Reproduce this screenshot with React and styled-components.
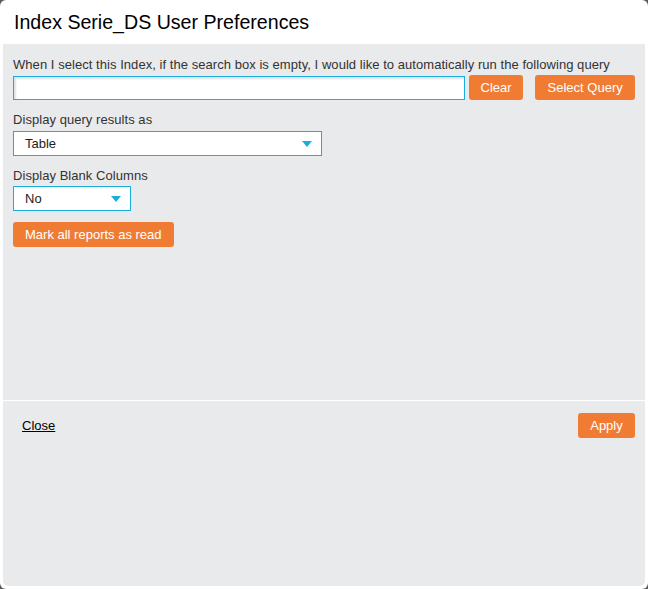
import React from "react";
import styled, { createGlobalStyle } from "styled-components";

const Global = createGlobalStyle`
  html, body { margin: 0; padding: 0; background: #5a5a5a; }
  body { font-family: "Liberation Sans", Arial, sans-serif; }
  * { box-sizing: border-box; }
`;

const Dialog = styled.div`
  width: 648px;
  height: 589px;
  background: #fff;
  border-radius: 6px;
  display: flex;
  flex-direction: column;
  padding: 0 3px 3px 3px;
`;

const Title = styled.h1`
  margin: 0;
  height: 44px;
  padding: 10px 0 0 11px;
  font-size: 19.6px;
  font-weight: normal;
  color: #000;
  line-height: 24px;
`;

const Panel = styled.div`
  flex: 1;
  background: #e9eaec;
  border-radius: 0 0 5px 5px;
  display: flex;
  flex-direction: column;
`;

const Content = styled.div`
  height: 357px;
  padding: 13px 10px 0 10px;
  display: flex;
  flex-direction: column;
  border-bottom: 1px solid #fff;
`;

const Label = styled.div`
  font-size: 13px;
  line-height: 15px;
  letter-spacing: 0.05px;
  color: #333;
  margin-top: ${(p) => p.$mt || 0}px;
  margin-bottom: ${(p) => p.$mb || 4}px;
`;

const Row = styled.div`
  display: flex;
  align-items: flex-end;
`;

const TextInput = styled.div`
  flex: 0 0 452px;
  height: 24px;
  background: #fff;
  border: 1px solid #1aaee0;
  box-shadow: inset 2px 2px 2px rgba(0, 0, 0, 0.12);
  margin-right: 4px;
`;

const Button = styled.button`
  flex-shrink: 0;
  white-space: nowrap;
  height: 25px;
  padding: 0 ${(p) => p.$px || 12}px;
  background: #f07c34;
  color: #fff;
  border: none;
  border-radius: 3px;
  font-family: "Liberation Sans", Arial, sans-serif;
  font-size: 13px;
  cursor: pointer;
  margin-left: ${(p) => p.$ml || 0}px;
`;

const Select = styled.div`
  width: ${(p) => p.$w}px;
  height: 25px;
  background: #fff;
  border: 1px solid #1aaee0;
  display: flex;
  align-items: center;
  justify-content: space-between;
  padding: 0 9px 0 11px;
  font-size: 13px;
  color: #222;
  margin-bottom: ${(p) => p.$mb || 0}px;
`;

const Arrow = () => (
  <svg width="10" height="6" viewBox="0 0 10 6">
    <path d="M0 0 H10 L5 6 Z" fill="#1aaee0" />
  </svg>
);

const Footer = styled.div`
  display: flex;
  justify-content: space-between;
  align-items: flex-start;
  padding: 12px 10px 0 19px;
`;

const CloseLink = styled.a`
  margin-top: 5px;
  font-size: 13px;
  color: #000;
  text-decoration: underline;
  cursor: pointer;
`;

export default function App() {
  return (
    <>
      <Global />
      <Dialog>
        <Title>Index Serie_DS User Preferences</Title>
        <Panel>
          <Content>
            <Label $mb={3}>
              When I select this Index, if the search box is empty, I would like to automatically run the following query
            </Label>
            <Row>
              <TextInput />
              <Button $px={11.5}>Clear</Button>
              <Button $px={12.5} $ml={12}>Select Query</Button>
            </Row>
            <Label $mt={12} $mb={4}>Display query results as</Label>
            <Select $w={309} $mb={12}>
              <span>Table</span>
              <Arrow />
            </Select>
            <Label $mb={3}>Display Blank Columns</Label>
            <Select $w={118} $mb={11}>
              <span>No</span>
              <Arrow />
            </Select>
            <Row>
              <Button $px={12}>Mark all reports as read</Button>
            </Row>
          </Content>
          <Footer>
            <CloseLink>Close</CloseLink>
            <Button $px={12.25}>Apply</Button>
          </Footer>
        </Panel>
      </Dialog>
    </>
  );
}
